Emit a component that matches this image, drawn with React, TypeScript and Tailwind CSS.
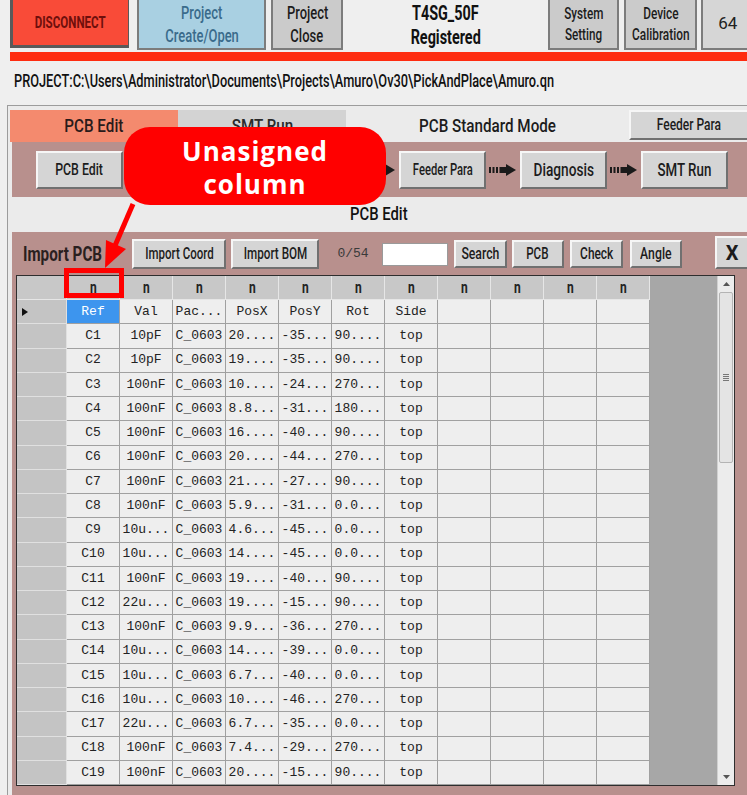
import React from 'react';

const sans = "font-['Roboto','Liberation_Sans',Arial,sans-serif]";
const mono = "font-['Liberation_Mono',monospace]";

const rows: string[][] = [
  ['C1', '10pF', 'C_0603', '20....', '-35...', '90....', 'top'],
  ['C2', '10pF', 'C_0603', '19....', '-35...', '90....', 'top'],
  ['C3', '100nF', 'C_0603', '10....', '-24...', '270...', 'top'],
  ['C4', '100nF', 'C_0603', '8.8...', '-31...', '180...', 'top'],
  ['C5', '100nF', 'C_0603', '16....', '-40...', '90....', 'top'],
  ['C6', '100nF', 'C_0603', '20....', '-44...', '270...', 'top'],
  ['C7', '100nF', 'C_0603', '21....', '-27...', '90....', 'top'],
  ['C8', '100nF', 'C_0603', '5.9...', '-31...', '0.0...', 'top'],
  ['C9', '10u...', 'C_0603', '4.6...', '-45...', '0.0...', 'top'],
  ['C10', '10u...', 'C_0603', '14....', '-45...', '0.0...', 'top'],
  ['C11', '100nF', 'C_0603', '19....', '-40...', '90....', 'top'],
  ['C12', '22u...', 'C_0603', '19....', '-15...', '90....', 'top'],
  ['C13', '100nF', 'C_0603', '9.9...', '-36...', '270...', 'top'],
  ['C14', '10u...', 'C_0603', '14....', '-39...', '0.0...', 'top'],
  ['C15', '10u...', 'C_0603', '6.7...', '-40...', '0.0...', 'top'],
  ['C16', '10u...', 'C_0603', '10....', '-46...', '270...', 'top'],
  ['C17', '22u...', 'C_0603', '6.7...', '-35...', '0.0...', 'top'],
  ['C18', '100nF', 'C_0603', '7.4...', '-29...', '270...', 'top'],
  ['C19', '100nF', 'C_0603', '20....', '-15...', '90....', 'top'],
];

const btn =
  'flex items-center justify-center whitespace-nowrap bg-[#d5d5d5] border-2 border-t-[#f6f6f6] border-l-[#f6f6f6] border-r-[#707070] border-b-[#707070] text-[#1c1c1c] font-medium';

// condensed look: the machine UI uses a narrow face, none is installed
const C = ({ children, s = 'scale-x-[0.75]', left = false }: { children: React.ReactNode; s?: string; left?: boolean }) => (
  <span className={`inline-block whitespace-nowrap ${s} ${left ? 'origin-left' : 'origin-center'}`}>{children}</span>
);

const FlowArrow = () => (
  <div className="w-[34px] flex items-center justify-center">
    <svg width="30" height="14" viewBox="0 0 30 14">
      <rect x="1" y="4" width="2" height="6" fill="#1a1a1a" />
      <rect x="4.5" y="4" width="2" height="6" fill="#1a1a1a" />
      <rect x="8" y="4" width="2" height="6" fill="#1a1a1a" />
      <rect x="11.5" y="4" width="7" height="6" fill="#1a1a1a" />
      <polygon points="18,1 28,7 18,13" fill="#1a1a1a" />
    </svg>
  </div>
);

const FlowBtn = ({ label, size, s }: { label?: string; size: string; s: string }) => (
  <div className={`${btn} ${size} w-[87px] h-[38px]`}>
    {label && <C s={s}>{label}</C>}
  </div>
);

export default function App() {
  return (
    <div className={`relative w-[747px] h-[795px] overflow-hidden bg-[#efefef] ${sans}`}>
      {/* top bar */}
      <div className="flex items-start h-[50px] pl-[10px]">
        <div className="w-[120px] h-[48px] bg-[#f94b38] border-l-[3px] border-b-[3px] border-r border-[#5a5a5a] flex items-center justify-center text-[#6e0f0c] text-[17px] font-bold">
          <C s="scale-x-[0.68]">DISCONNECT</C>
        </div>
        <div className="ml-[8px] w-[130px] h-[50px] bg-[#a9d0e2] border-2 border-t-0 border-[#7c7c7c] flex flex-col items-center justify-center text-[#3a6b8b] text-[18px] leading-[23px] font-medium">
          <C s="scale-x-[0.72]">Project</C>
          <C s="scale-x-[0.72]">Create/Open</C>
        </div>
        <div className="ml-[5px] w-[72px] h-[50px] bg-[#cbcbcb] border-2 border-t-0 border-[#7c7c7c] flex flex-col items-center justify-center text-[#1c1c1c] text-[18px] leading-[23px] font-medium">
          <C s="scale-x-[0.72]">Project</C>
          <C s="scale-x-[0.72]">Close</C>
        </div>
        <div className="w-[206px] h-[50px] flex flex-col items-center justify-center text-[#111] text-[20px] leading-[24px] font-bold">
          <C s="scale-x-[0.72]">T4SG_50F</C>
          <C s="scale-x-[0.72]">Registered</C>
        </div>
        <div className="w-[72px] h-[50px] bg-[#cbcbcb] border-2 border-t-0 border-[#7c7c7c] flex flex-col items-center justify-center text-[#1c1c1c] text-[16px] leading-[21px] font-medium">
          <C s="scale-x-[0.73]">System</C>
          <C s="scale-x-[0.73]">Setting</C>
        </div>
        <div className="ml-[5px] w-[73px] h-[50px] bg-[#cbcbcb] border-2 border-t-0 border-[#7c7c7c] flex flex-col items-center justify-center text-[#1c1c1c] text-[16px] leading-[21px] font-medium">
          <C s="scale-x-[0.74]">Device</C>
          <C s="scale-x-[0.74]">Calibration</C>
        </div>
        <div className="ml-[4px] w-[46px] h-[50px] bg-[#d6d6d6] border-2 border-t-0 border-r-0 border-[#7c7c7c] flex items-center pl-[15px] text-[#222] text-[17px]">
          64
        </div>
      </div>
      <div className="ml-[10px] mt-[2px] h-[9px] bg-[#fe2c10]" />

      {/* project path */}
      <div className="h-[44px] pt-[9px] pl-[14px] text-[18px] leading-[22px] text-[#111] font-medium">
        <C s="scale-x-[0.71]" left>
          PROJECT:C:\Users\Administrator\Documents\Projects\Amuro\Ov30\PickAndPlace\Amuro.qn
        </C>
      </div>

      {/* panel */}
      <div className="ml-[7px] h-[690px] border-l border-t border-[#9c9c9c] pl-[2px] pt-[4px] flex flex-col bg-[#ebebeb]">
        <div className="flex h-[32px] font-medium">
          <div className="w-[168px] bg-[#f48a6e] flex items-center justify-center text-[19px] text-[#2a1a1a]">
            <C s="scale-x-[0.8]">PCB Edit</C>
          </div>
          <div className="w-[168px] bg-[#d3d3d3] flex items-center justify-center text-[19px] text-[#2a2a2a]">
            <C s="scale-x-[0.8]">SMT Run</C>
          </div>
          <div className="flex-1 flex items-center justify-center text-[19px] text-[#1c1c1c]">
            <C s="scale-x-[0.8]">PCB Standard Mode</C>
          </div>
          <div className={`${btn} w-[118px] h-[30px] text-[16px] border-r-0`}>
            <C s="scale-x-[0.75]">Feeder Para</C>
          </div>
        </div>

        <div className="ml-[2px] h-[55px] bg-[#b8908d] flex items-center pl-[24px]">
          <FlowBtn label="PCB Edit" size="text-[16px]" s="scale-x-[0.77]" />
          <FlowArrow />
          <FlowBtn size="text-[16px]" s="scale-x-[0.77]" />
          <FlowArrow />
          <FlowBtn size="text-[16px]" s="scale-x-[0.77]" />
          <FlowArrow />
          <FlowBtn label="Feeder Para" size="text-[16px]" s="scale-x-[0.7]" />
          <FlowArrow />
          <FlowBtn label="Diagnosis" size="text-[18px]" s="scale-x-[0.76]" />
          <FlowArrow />
          <FlowBtn label="SMT Run" size="text-[18px]" s="scale-x-[0.74]" />
        </div>

        <div className="h-[35px] flex items-center justify-center text-[19px] text-[#111] font-medium">
          <C s="scale-x-[0.78]">PCB Edit</C>
        </div>

        <div className="ml-[2px] flex-1 bg-[#b8908d] flex flex-col">
          {/* import row */}
          <div className="h-[42px] flex items-center pl-[11px] mt-[1px]">
            <span className="w-[110px] text-[20px] text-[#2a1f1f] font-bold">
              <C s="scale-x-[0.76]" left>Import PCB</C>
            </span>
            <div className={`${btn} w-[94px] h-[30px] text-[16px]`}>
              <C s="scale-x-[0.72]">Import Coord</C>
            </div>
            <div className={`${btn} ml-[5px] w-[88px] h-[30px] text-[16px]`}>
              <C s="scale-x-[0.73]">Import BOM</C>
            </div>
            <span className={`${mono} w-[63px] pl-[18px] text-[13px] text-[#3a3a3a]`}>0/54</span>
            <div className="w-[66px] h-[23px] bg-white border border-[#9a9a9a]" />
            <div className={`${btn} ml-[6px] w-[53px] h-[28px] text-[17px]`}>
              <C s="scale-x-[0.72]">Search</C>
            </div>
            <div className={`${btn} ml-[5px] w-[52px] h-[28px] text-[17px]`}>
              <C s="scale-x-[0.68]">PCB</C>
            </div>
            <div className={`${btn} ml-[6px] w-[54px] h-[28px] text-[17px]`}>
              <C s="scale-x-[0.7]">Check</C>
            </div>
            <div className={`${btn} ml-[7px] w-[52px] h-[28px] text-[17px]`}>
              <C s="scale-x-[0.72]">Angle</C>
            </div>
            <div className={`${btn} ml-[33px] w-[32px] h-[33px] text-[20px] !font-bold border-r-0 -mt-[3px]`}>X</div>
          </div>

          {/* table */}
          <div className="ml-[4px] w-[719px] h-[511px] border border-[#2e2e2e] flex bg-[#a7a7a7]">
            <div className="flex-1 flex flex-col">
              <div className="flex h-[24px] bg-[#c8c8c8]">
                <div className="w-[50px] border-r border-b border-[#e6e6e6]" />
                {Array.from({ length: 11 }).map((_, i) => (
                  <div key={i} className="w-[53px] border-r border-b border-[#e6e6e6] flex items-center justify-center text-[16px] font-bold text-[#222]">
                    <C s="scale-x-[0.75]">n</C>
                  </div>
                ))}
                <div className="flex-1 bg-[#a7a7a7]" />
              </div>
              <div className={`flex h-[24.25px] ${mono} text-[13px] text-[#222]`}>
                <div className="w-[50px] bg-[#c4c4c4] border-r border-b border-[#e0e0e0] flex items-center pl-[4px]">
                  <svg width="8" height="10" viewBox="0 0 8 10">
                    <polygon points="1,1 7,5 1,9" fill="#111" />
                  </svg>
                </div>
                {['Ref', 'Val', 'Pac...', 'PosX', 'PosY', 'Rot', 'Side', '', '', '', ''].map((h, i) => (
                  <div
                    key={i}
                    className={`w-[53px] border-r border-b border-[#a0a0a0] flex items-center justify-center ${
                      i === 0 ? 'bg-[#3d95ee] text-white' : 'bg-[#eeeeee]'
                    }`}
                  >
                    {h}
                  </div>
                ))}
                <div className="flex-1" />
              </div>
              {rows.map(r => (
                <div key={r[0]} className={`flex h-[24.25px] ${mono} text-[13px] text-[#222]`}>
                  <div className="w-[50px] bg-[#c4c4c4] border-r border-b border-[#e0e0e0]" />
                  {[...r, '', '', '', ''].map((c, i) => (
                    <div key={i} className="w-[53px] bg-[#eeeeee] border-r border-b border-[#a0a0a0] flex items-center justify-center whitespace-pre">
                      {c}
                    </div>
                  ))}
                  <div className="flex-1" />
                </div>
              ))}
            </div>
            {/* scrollbar */}
            <div className="w-[17px] bg-[#ececec] border-l border-[#d0d0d0] flex flex-col">
              <div className="h-[16px] flex items-center justify-center">
                <svg width="7" height="4" viewBox="0 0 7 4">
                  <polygon points="0,4 3.5,0 7,4" fill="#555" />
                </svg>
              </div>
              <div className="mx-[1px] h-[171px] bg-[#e4e4e4] border border-[#b4b4b4] rounded-[2px] flex items-center justify-center">
                <div className="flex flex-col gap-[1px]">
                  <div className="w-[6px] h-[1px] bg-[#777]" />
                  <div className="w-[6px] h-[1px] bg-[#777]" />
                  <div className="w-[6px] h-[1px] bg-[#777]" />
                  <div className="w-[6px] h-[1px] bg-[#777]" />
                </div>
              </div>
              <div className="flex-1" />
              <div className="h-[16px] flex items-center justify-center">
                <svg width="7" height="4" viewBox="0 0 7 4">
                  <polygon points="0,0 3.5,4 7,0" fill="#555" />
                </svg>
              </div>
            </div>
          </div>
        </div>
      </div>

      {/* annotation overlay */}
      <div className="absolute left-[124px] top-[127px] w-[262px] h-[78px] bg-[#ff0000] rounded-[26px] flex flex-col items-center justify-center pt-[4px] font-['Open_Sans',sans-serif] font-bold text-white text-[26px] leading-[33px] tracking-[1px]">
        <span>Unasigned</span>
        <span>column</span>
      </div>
      <svg className="absolute left-0 top-0" width="747" height="795" viewBox="0 0 747 795">
        <line x1="133" y1="204" x2="114" y2="248" stroke="#ff0000" strokeWidth="5" />
        <polygon points="105,268 126,249 106,240" fill="#ff0000" />
      </svg>
      <div className="absolute left-[64px] top-[268px] w-[60px] h-[30px] border-[5px] border-[#ff0000]" />
    </div>
  );
}
